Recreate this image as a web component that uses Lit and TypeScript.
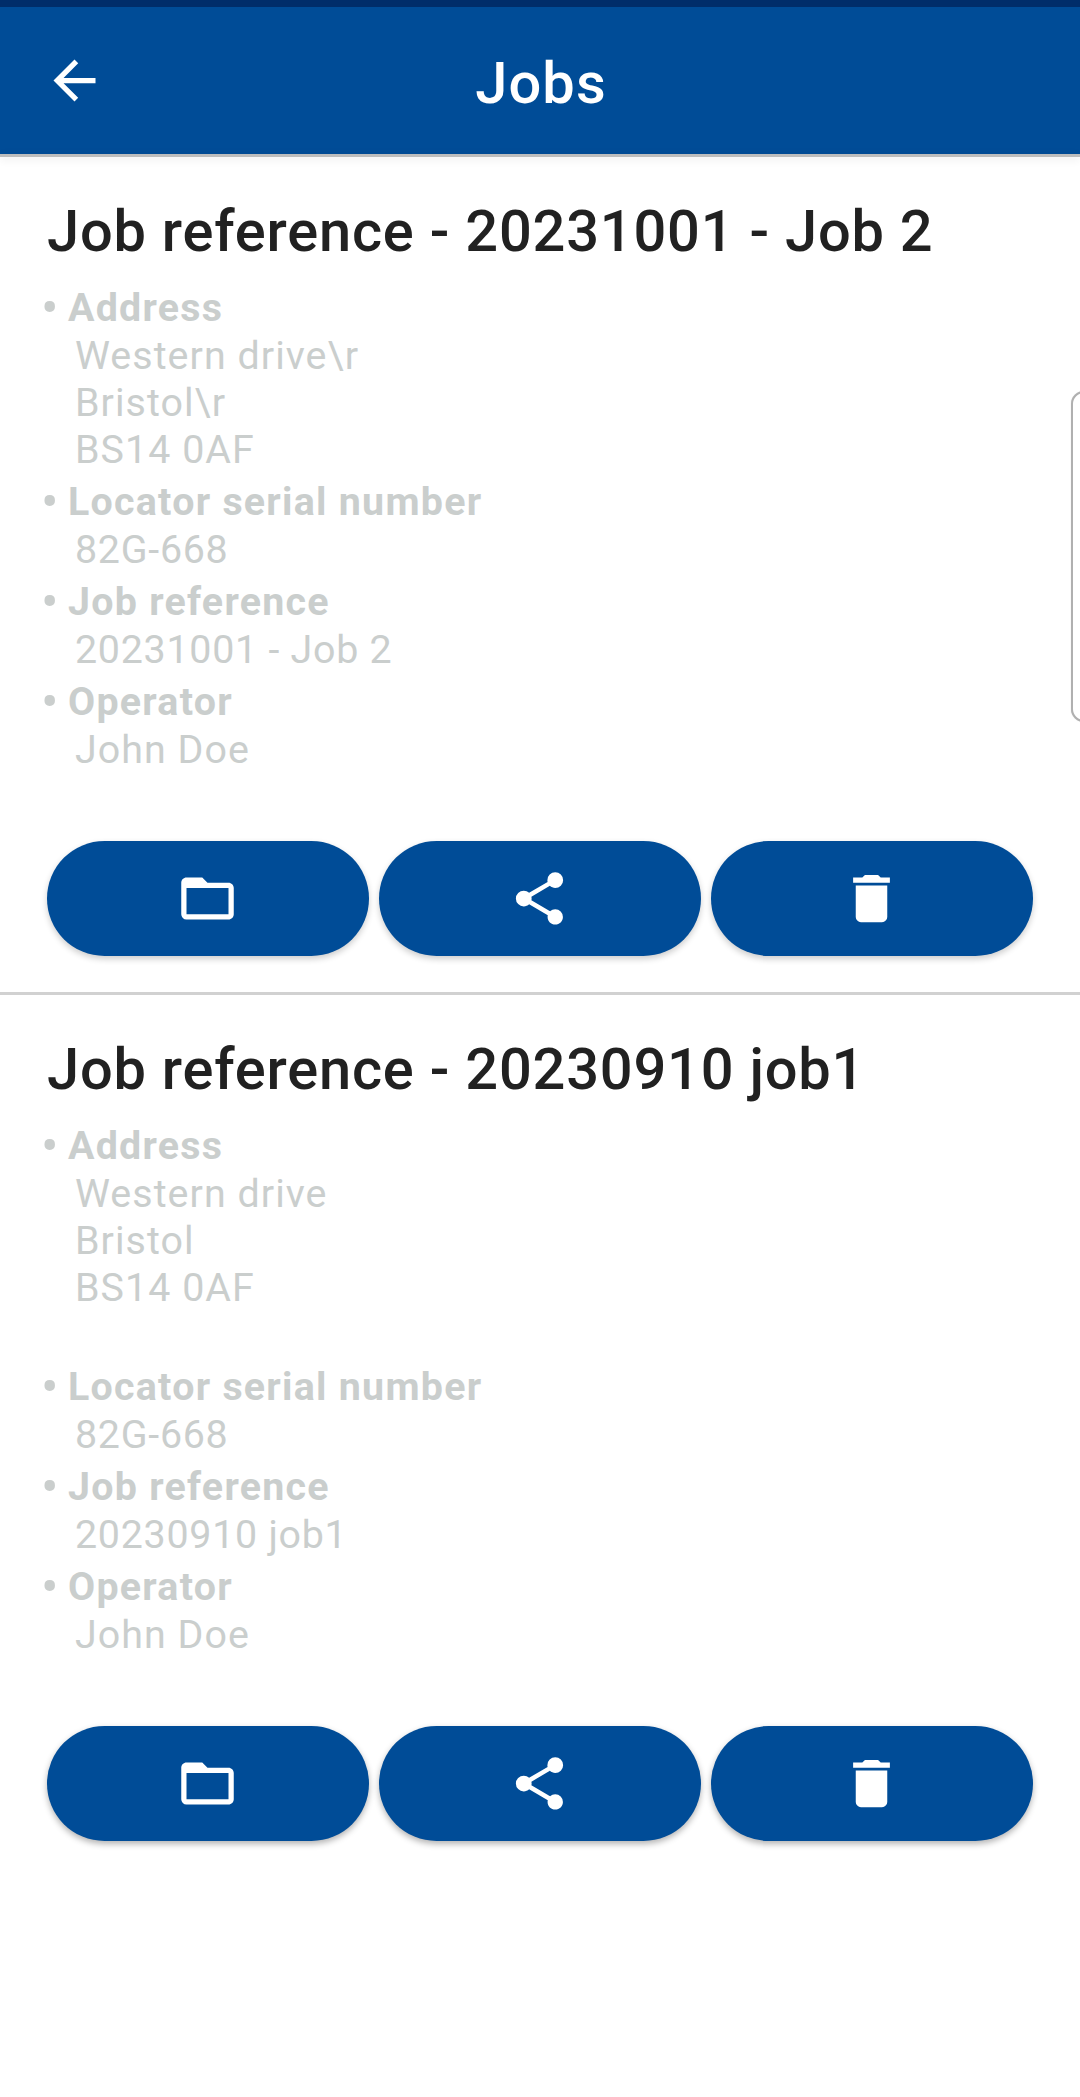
import { LitElement, html, css, svg } from "lit";
import { customElement, property } from "lit/decorators.js";
import { classMap } from "lit/directives/class-map.js";

interface Field { label: string; lines: string[]; }
interface Job { title: string; fields: Field[]; }

const ICONS: Record<string, string> = {
  back: "M20 11H7.83l5.59-5.59L12 4l-8 8 8 8 1.41-1.41L7.83 13H20v-2z",
  folder: "M20,18H4V8H20M20,6H12L10,4H4C2.89,4 2,4.89 2,6V18A2,2 0 0,0 4,20H20C21.11,20 22,19.1 22,18V8C22,6.89 21.1,6 20,6Z",
  share: "M18,16.08C17.24,16.08 16.56,16.38 16.04,16.85L8.91,12.7C8.96,12.47 9,12.24 9,12C9,11.76 8.96,11.53 8.91,11.3L15.96,7.19C16.5,7.69 17.21,8 18,8A3,3 0 0,0 21,5A3,3 0 0,0 18,2A3,3 0 0,0 15,5C15,5.24 15.04,5.47 15.09,5.7L8.04,9.81C7.5,9.31 6.79,9 6,9A3,3 0 0,0 3,12A3,3 0 0,0 6,15C6.79,15 7.5,14.69 8.04,14.19L15.16,18.34C15.11,18.55 15.08,18.77 15.08,19C15.08,20.61 16.39,21.91 18,21.91C19.61,21.91 20.92,20.61 20.92,19A2.92,2.92 0 0,0 18,16.08Z",
  delete: "M19,4H15.5L14.5,3H9.5L8.5,4H5V6H19M6,19A2,2 0 0,0 8,21H16A2,2 0 0,0 18,19V7H6V19Z",
};

const JOBS: Job[] = [
  {
    title: "Job reference - 20231001 - Job 2",
    fields: [
      { label: "Address", lines: ["Western drive\\r", "Bristol\\r", "BS14 0AF"] },
      { label: "Locator serial number", lines: ["82G-668"] },
      { label: "Job reference", lines: ["20231001 - Job 2"] },
      { label: "Operator", lines: ["John Doe"] },
    ],
  },
  {
    title: "Job reference - 20230910 job1",
    fields: [
      { label: "Address", lines: ["Western drive", "Bristol", "BS14 0AF", ""] },
      { label: "Locator serial number", lines: ["82G-668"] },
      { label: "Job reference", lines: ["20230910 job1"] },
      { label: "Operator", lines: ["John Doe"] },
    ],
  },
];

@customElement("app-icon")
class AppIcon extends LitElement {
  @property() name = "";
  static styles = css`
    :host { display: block; width: 63px; height: 63px; }
    .glyph { display: block; width: 63px; height: 63px; fill: #fff; }
  `;
  render() {
    return html`<svg class="glyph" viewBox="0 0 24 24">${svg`<path d=${ICONS[this.name]}></path>`}</svg>`;
  }
}

@customElement("job-card")
class JobCard extends LitElement {
  @property({ attribute: false }) job!: Job;
  static styles = css`
    :host { display: block; padding: 40px 47px 36px; }
    .title { margin: 0; font-size: 57.75px; line-height: 68px; font-weight: 500; color: #212121; letter-spacing: 0.8px; white-space: nowrap; }
    .fields { margin: 19px 0 0 -4px; padding: 0; list-style: none; color: #cacecd; font-size: 39.375px; letter-spacing: 1.05px; }
    .field { margin-bottom: 5px; }
    .label { display: flex; height: 48px; line-height: 48px; font-weight: 700; letter-spacing: 1.26px; }
    .bullet { width: 25px; margin-left: -2px; margin-right: 2px; font-size: 52px; line-height: 50px; font-weight: 400; letter-spacing: 0; }
    .line { height: 47px; line-height: 47px; padding-left: 32px; }
    .numeric { letter-spacing: 0.74px; }
    .actions { display: grid; grid-template-columns: repeat(3, 1fr); gap: 10px; margin-top: 68px; }
    .action { display: flex; align-items: center; justify-content: center; height: 115px; padding: 0 2px 0 0; border: 0; border-radius: 58px; background: #004c97; box-shadow: 0 3px 6px rgba(0, 0, 0, var(--shadow, 0.2)); }
  `;
  render() {
    return html`
      <h2 class="title">${this.job.title}</h2>
      <ul class="fields">
        ${this.job.fields.map((f) => html`
          <li class="field">
            <div class="label"><span class="bullet">•</span><span>${f.label}</span></div>
            ${f.lines.map((l) => html`<div class=${classMap({ line: true, numeric: /^\d/.test(l) })}>${l}</div>`)}
          </li>`)}
      </ul>
      <div class="actions">
        ${["folder", "share", "delete"].map((n) => html`<button class="action" aria-label=${n}><app-icon name=${n}></app-icon></button>`)}
      </div>`;
  }
}

@customElement("app-root")
class AppRoot extends LitElement {
  static styles = css`
    :host { display: block; position: relative; overflow: hidden; height: 2097px; background: #fff; font-family: Roboto, sans-serif; }
    .status { height: 7px; background: #002d6a; }
    .bar { display: grid; grid-template-columns: 126px 1fr 126px; align-items: center; height: 147px; background: #004c97; }
    .back { padding-left: 42.5px; }
    .heading { margin: 5px 0 0 2px; text-align: center; font-size: 57.75px; line-height: 68px; font-weight: 500; color: #fff; letter-spacing: 1.1px; }
    .edge { height: 3px; background: #bdbdbd; box-shadow: 0 2px 8px rgba(0, 0, 0, 0.12); }
    .divider { height: 3px; background: #d1d1d1; }
    .last { --shadow: 0.3; }
    .handle { position: absolute; left: 1071px; top: 391px; width: 40px; height: 331px; box-sizing: border-box; border: 2px solid #b0b0b0; border-radius: 13px; background: #fff; box-shadow: 0 0 1px #c8c8c8; }
  `;
  render() {
    return html`
      <div class="status"></div>
      <header class="bar">
        <app-icon class="back" name="back"></app-icon>
        <h1 class="heading">Jobs</h1>
      </header>
      <div class="edge"></div>
      <job-card .job=${JOBS[0]}></job-card>
      <div class="divider"></div>
      <job-card class="last" .job=${JOBS[1]}></job-card>
      <div class="handle"></div>`;
  }
}
